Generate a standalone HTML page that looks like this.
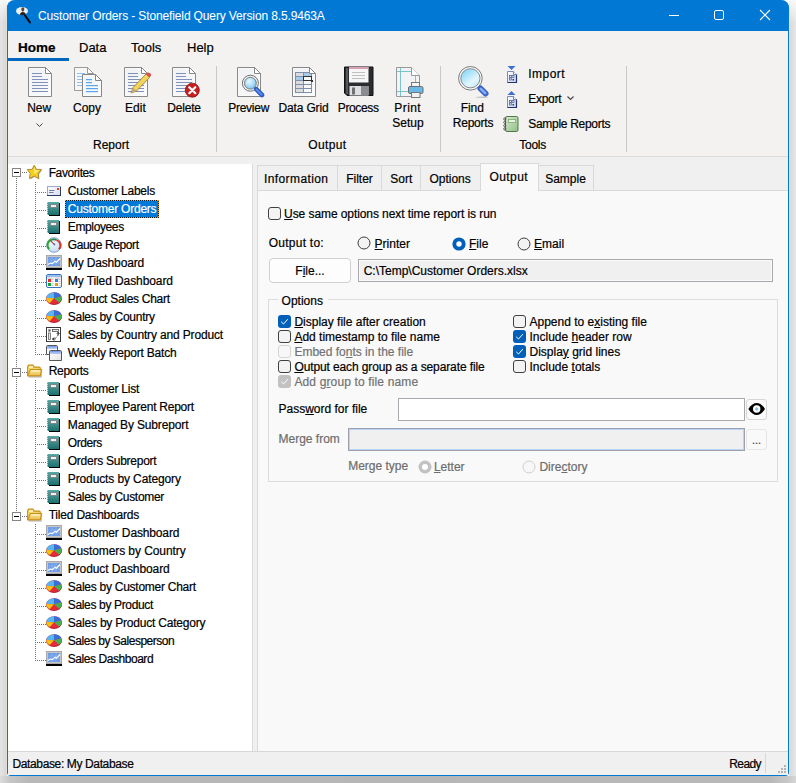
<!DOCTYPE html><html><head><meta charset="utf-8"><title>Customer Orders - Stonefield Query</title><style>
*{margin:0;padding:0;box-sizing:border-box}
html,body{width:796px;height:783px;overflow:hidden;background:#fff;font-family:"Liberation Sans",sans-serif;color:#000}
.a{position:absolute}
.t{position:absolute;white-space:nowrap;-webkit-text-stroke:0.2px currentColor}
svg{position:absolute;overflow:visible}
.u{text-decoration:underline;text-underline-offset:1px;text-decoration-thickness:1px}
</style></head><body>
<div class="a" style="left:0px;top:0px;width:7px;height:783px;background:linear-gradient(to bottom,rgba(255,255,255,0.75) 0px,rgba(255,255,255,0) 22px),linear-gradient(to right,#e4e4e4,#d6d6d6);"></div>
<div class="a" style="left:6px;top:8px;width:1px;height:768px;background:#e2ddd6;"></div>
<div class="a" style="left:789px;top:0px;width:7px;height:783px;background:linear-gradient(to bottom,rgba(255,255,255,0.8) 0px,rgba(255,255,255,0) 24px),linear-gradient(to right,#d8d8d8,#e6e6e6);"></div>
<div class="a" style="left:789px;top:8px;width:1px;height:768px;background:#e8e0d8;"></div>
<div class="a" style="left:0px;top:776px;width:796px;height:7px;background:linear-gradient(to right,#dcdcdc 0px,#c6c6c6 10px,#b8b8b8 28px,#b6b6b6 400px,#b8b8b8 770px,#c8c8c8 788px,#d6d6d6 796px);"></div>
<div class="a" style="left:7px;top:0px;width:782px;height:776px;background:#f0f0f0;border:1px solid #0078d4;border-top:0;border-radius:8px 8px 4px 4px;"></div>
<div class="a" style="left:7px;top:0px;width:782px;height:31px;background:#0078d4;border-radius:8px 8px 0 0;"></div>
<svg style="left:14px;top:4px" width="20" height="22" viewBox="0 0 20 22"><ellipse cx="8" cy="7" rx="6" ry="4" fill="#e8f2fb"/><path d="M8.8,3.2 C10,3.2 10.4,4.3 10.3,5.5 C10.2,6.8 9.6,7.6 8.8,7.6 C8,7.6 7.4,6.8 7.3,5.5 C7.2,4.3 7.6,3.2 8.8,3.2Z" fill="#6a4028"/><path d="M5.6,10.6 C6.4,8.6 7.5,7.9 8.8,7.9 C10.1,7.9 11.2,8.6 12,10.3 C10,11.4 7.5,11.3 5.6,10.6Z" fill="#2a2018"/><path d="M11,11.5 L16,18.5" stroke="#000" stroke-width="2" stroke-linecap="round"/></svg>
<div class="t" style="left:38px;top:10px;font-size:12px;line-height:12px;color:#fff;letter-spacing:-0.13px;-webkit-text-stroke:0.05px #fff;">Customer Orders - Stonefield Query Version 8.5.9463A</div>
<div class="a" style="left:669px;top:15px;width:10px;height:1px;background:#fff;"></div>
<div class="a" style="left:714px;top:10px;width:10px;height:10px;border:1px solid #fff;border-radius:2px;"></div>
<svg style="left:759px;top:9px" width="12" height="12" viewBox="0 0 12 12"><path d="M1,1 L11,11 M11,1 L1,11" stroke="#fff" stroke-width="1.1"/></svg>
<div class="a" style="left:8px;top:31px;width:780px;height:125px;background:#f3f2f1;"></div>
<div class="a" style="left:8px;top:156px;width:780px;height:1px;background:#dcdcdc;"></div>
<div class="t" style="left:18px;top:41px;font-size:13.5px;line-height:13.5px;font-weight:bold;">Home</div>
<div class="a" style="left:8px;top:58px;width:61px;height:3px;background:#0067c0;"></div>
<div class="t" style="left:79px;top:41px;font-size:13px;line-height:13px;">Data</div>
<div class="t" style="left:131px;top:41px;font-size:13px;line-height:13px;">Tools</div>
<div class="t" style="left:187px;top:41px;font-size:13px;line-height:13px;">Help</div>
<svg width="0" height="0" style="position:absolute"><defs><linearGradient id="pg" x1="0" y1="0" x2="1" y2="1"><stop offset="0" stop-color="#dfe3ea"/><stop offset="1" stop-color="#f4f5f7"/></linearGradient><radialGradient id="lens" cx="0.4" cy="0.35" r="0.7"><stop offset="0" stop-color="#eaf8ff"/><stop offset="0.6" stop-color="#a8dcf6"/><stop offset="1" stop-color="#6cc0ea"/></radialGradient><linearGradient id="lens2" x1="0.2" y1="0.1" x2="0.8" y2="0.9"><stop offset="0" stop-color="#8cd8f8"/><stop offset="0.7" stop-color="#e4f6fe"/><stop offset="1" stop-color="#c8ecfc"/></linearGradient><linearGradient id="teal" x1="0" y1="0" x2="0" y2="1"><stop offset="0" stop-color="#5aa7a4"/><stop offset="1" stop-color="#1d6f6e"/></linearGradient><linearGradient id="grn" x1="0" y1="0" x2="1" y2="1"><stop offset="0" stop-color="#d8ead0"/><stop offset="1" stop-color="#8fbf84"/></linearGradient><linearGradient id="fold" x1="0" y1="0" x2="0" y2="1"><stop offset="0" stop-color="#ffeaa0"/><stop offset="1" stop-color="#e8b84a"/></linearGradient></defs></svg>
<svg style="left:24px;top:66px" width="32" height="32" viewBox="0 0 32 32"><defs></defs><path d="M4.5,1.5 H21.5 L27.5,7.5 V30.5 H4.5 Z" fill="#fff" stroke="#888" stroke-width="1"/><path d="M5.5,2.5 H21 V8 H26.5 V29.5 H5.5Z" fill="url(#pg)" opacity="0.5"/><path d="M21.5,1.5 V7.5 H27.5 Z" fill="#fff" stroke="#888" stroke-width="1" stroke-linejoin="round"/><rect x="8" y="7" width="10" height="1" fill="#8090b8"/><rect x="8" y="10" width="10" height="1" fill="#8090b8"/><rect x="8" y="13" width="16" height="1" fill="#8090b8"/><rect x="8" y="16" width="16" height="1" fill="#8090b8"/><rect x="8" y="19" width="16" height="1" fill="#8090b8"/><rect x="8" y="22" width="16" height="1" fill="#8090b8"/><rect x="8" y="25" width="16" height="1" fill="#8090b8"/></svg>
<div class="t" style="left:-60.8px;width:200px;text-align:center;top:102px;font-size:12px;line-height:12px;">New</div>
<svg style="left:36px;top:123px" width="8" height="5" viewBox="0 0 8 5"><path d="M0.5,0.5 L3.5,3.5 L6.5,0.5" fill="none" stroke="#444" stroke-width="1"/></svg>
<svg style="left:70px;top:64px" width="40" height="36" viewBox="0 0 40 36"><path d="M4.5,3.5 H17.5 L23.5,9.5 V26.5 H4.5Z" fill="#f6f6f6" stroke="#9a9a9a"/><path d="M17.5,3.5 V9.5 H23.5Z" fill="#fff" stroke="#9a9a9a" stroke-linejoin="round"/><rect x="7" y="9" width="8" height="1" fill="#8cc0f0"/><rect x="7" y="12" width="8" height="1" fill="#8cc0f0"/><rect x="7" y="15" width="8" height="1" fill="#8cc0f0"/><rect x="7" y="18" width="8" height="1" fill="#8cc0f0"/><rect x="7" y="21" width="8" height="1" fill="#8cc0f0"/><path d="M12.5,10.5 H25.5 L31.5,16.5 V32.5 H12.5Z" fill="#fff" stroke="#858585"/><path d="M13.5,11.5 H25 V17 H30.5 V31.5 H13.5Z" fill="url(#pg)" opacity="0.45"/><path d="M25.5,10.5 V16.5 H31.5Z" fill="#fff" stroke="#858585" stroke-linejoin="round"/><rect x="16" y="15" width="6" height="1.2" fill="#58a6f0"/><rect x="16" y="18" width="6" height="1.2" fill="#58a6f0"/><rect x="16" y="21" width="12" height="1.2" fill="#58a6f0"/><rect x="16" y="24" width="12" height="1.2" fill="#58a6f0"/><rect x="16" y="27" width="12" height="1.2" fill="#58a6f0"/></svg>
<div class="t" style="left:-13px;width:200px;text-align:center;top:102px;font-size:12px;line-height:12px;">Copy</div>
<svg style="left:120px;top:66px" width="32" height="32" viewBox="0 0 32 32"><defs></defs><path d="M4.5,1.5 H21.5 L27.5,7.5 V30.5 H4.5 Z" fill="#fff" stroke="#888" stroke-width="1"/><path d="M5.5,2.5 H21 V8 H26.5 V29.5 H5.5Z" fill="url(#pg)" opacity="0.5"/><path d="M21.5,1.5 V7.5 H27.5 Z" fill="#fff" stroke="#888" stroke-width="1" stroke-linejoin="round"/><rect x="8" y="7" width="10" height="1" fill="#8090b8"/><rect x="8" y="10" width="10" height="1" fill="#8090b8"/><rect x="8" y="13" width="16" height="1" fill="#8090b8"/><rect x="8" y="16" width="16" height="1" fill="#8090b8"/><rect x="8" y="19" width="16" height="1" fill="#8090b8"/><rect x="8" y="22" width="16" height="1" fill="#8090b8"/><rect x="8" y="25" width="16" height="1" fill="#8090b8"/><path d="M11,27 L13,21.5 L26,8 L29.5,11.5 L16.5,25 Z" fill="#f4d35a" stroke="#8a7a3a" stroke-width="0.8"/><path d="M11,27 L13,21.5 L16.5,25Z" fill="#c8a878"/><path d="M26,8 L27.5,6.5 Q29.5,6 31,8 L31,9.5 L29.5,11.5Z" fill="#e05050"/></svg>
<div class="t" style="left:35.400000000000006px;width:200px;text-align:center;top:102px;font-size:12px;line-height:12px;">Edit</div>
<svg style="left:168px;top:66px" width="32" height="32" viewBox="0 0 32 32"><defs></defs><path d="M4.5,1.5 H21.5 L27.5,7.5 V30.5 H4.5 Z" fill="#fff" stroke="#888" stroke-width="1"/><path d="M5.5,2.5 H21 V8 H26.5 V29.5 H5.5Z" fill="url(#pg)" opacity="0.5"/><path d="M21.5,1.5 V7.5 H27.5 Z" fill="#fff" stroke="#888" stroke-width="1" stroke-linejoin="round"/><rect x="8" y="7" width="10" height="1" fill="#8090b8"/><rect x="8" y="10" width="10" height="1" fill="#8090b8"/><rect x="8" y="13" width="16" height="1" fill="#8090b8"/><rect x="8" y="16" width="16" height="1" fill="#8090b8"/><rect x="8" y="19" width="16" height="1" fill="#8090b8"/><rect x="8" y="22" width="16" height="1" fill="#8090b8"/><rect x="8" y="25" width="16" height="1" fill="#8090b8"/><circle cx="24.3" cy="24.2" r="7" fill="#c81e1e" stroke="#8a1010" stroke-width="0.8"/><path d="M21.3,21.2 L27.3,27.2 M27.3,21.2 L21.3,27.2" stroke="#fff" stroke-width="2.2" stroke-linecap="round"/></svg>
<div class="t" style="left:84px;width:200px;text-align:center;top:102px;font-size:12px;line-height:12px;letter-spacing:-0.2px;">Delete</div>
<div class="a" style="left:216px;top:66px;width:1px;height:86px;background:#c8c8c8;"></div>
<div class="a" style="left:440px;top:66px;width:1px;height:86px;background:#c8c8c8;"></div>
<div class="a" style="left:626px;top:66px;width:1px;height:86px;background:#c8c8c8;"></div>
<div class="t" style="left:11px;width:200px;text-align:center;top:139px;font-size:12px;line-height:12px;">Report</div>
<svg style="left:233px;top:66px" width="32" height="32" viewBox="0 0 32 32"><defs></defs><path d="M4.5,1.5 H21.5 L27.5,7.5 V30.5 H4.5 Z" fill="#fff" stroke="#888" stroke-width="1"/><path d="M5.5,2.5 H21 V8 H26.5 V29.5 H5.5Z" fill="url(#pg)" opacity="0.5"/><path d="M21.5,1.5 V7.5 H27.5 Z" fill="#fff" stroke="#888" stroke-width="1" stroke-linejoin="round"/><circle cx="17.4" cy="17.2" r="8" fill="#f6f6f6" stroke="#6e6e6e" stroke-width="1"/><circle cx="17.4" cy="17.2" r="5.9" fill="url(#lens)" stroke="#7a7a7a" stroke-width="1"/><path d="M23.2,23.2 L29,29" stroke="#2c5cc0" stroke-width="4.6" stroke-linecap="round"/><path d="M23.4,23.4 L28.6,28.6" stroke="#5a8ef0" stroke-width="2" stroke-linecap="round"/></svg>
<div class="t" style="left:148.6px;width:200px;text-align:center;top:102px;font-size:12px;line-height:12px;letter-spacing:-0.25px;">Preview</div>
<svg style="left:288px;top:66px" width="32" height="32" viewBox="0 0 32 32"><defs></defs><path d="M4.5,1.5 H21.5 L27.5,7.5 V30.5 H4.5 Z" fill="#fff" stroke="#888" stroke-width="1"/><path d="M5.5,2.5 H21 V8 H26.5 V29.5 H5.5Z" fill="url(#pg)" opacity="0.5"/><path d="M21.5,1.5 V7.5 H27.5 Z" fill="#fff" stroke="#888" stroke-width="1" stroke-linejoin="round"/><rect x="7.5" y="6.5" width="8" height="4" fill="#dcdcdc" stroke="#7f8fae" stroke-width="1"/><rect x="15.5" y="6.5" width="8" height="4" fill="#a9cbe8" stroke="#7f8fae" stroke-width="1"/><rect x="7.5" y="10.5" width="8" height="4" fill="#a9cbe8" stroke="#7f8fae" stroke-width="1"/><rect x="15.5" y="10.5" width="8" height="4" fill="#f8f8f8" stroke="#7f8fae" stroke-width="1"/><rect x="7.5" y="14.5" width="8" height="4" fill="#dcdcdc" stroke="#7f8fae" stroke-width="1"/><rect x="15.5" y="14.5" width="8" height="4" fill="#f8f8f8" stroke="#7f8fae" stroke-width="1"/><rect x="7.5" y="18.5" width="8" height="4" fill="#dcdcdc" stroke="#7f8fae" stroke-width="1"/><rect x="15.5" y="18.5" width="8" height="4" fill="#f8f8f8" stroke="#7f8fae" stroke-width="1"/><rect x="7.5" y="22.5" width="8" height="4" fill="#dcdcdc" stroke="#7f8fae" stroke-width="1"/><rect x="15.5" y="22.5" width="8" height="4" fill="#f8f8f8" stroke="#7f8fae" stroke-width="1"/><rect x="15.5" y="10.5" width="8" height="4" fill="none" stroke="#333" stroke-width="1"/><rect x="23" y="14" width="2" height="2" fill="#333"/><path d="M21.5,1.5 V7.5 H27.5 Z" fill="#fff" stroke="#888" stroke-width="1"/></svg>
<div class="t" style="left:203.5px;width:200px;text-align:center;top:102px;font-size:12px;line-height:12px;letter-spacing:-0.15px;">Data Grid</div>
<svg style="left:342px;top:64px" width="34" height="34" viewBox="0 0 34 34"><path d="M2.5,3 H31 V31.5 H5 L2.5,29 Z" fill="#2a2c30" stroke="#111" stroke-width="1"/><rect x="4" y="4" width="2" height="26" fill="#55585e"/><rect x="7" y="3" width="19.5" height="15.5" fill="#f6f6f6"/><rect x="7" y="3" width="19.5" height="2" fill="#d9a0b4"/><rect x="10" y="8" width="13" height="1" fill="#c0c0c0"/><rect x="10" y="11" width="13" height="1" fill="#c0c0c0"/><rect x="10" y="14" width="13" height="1" fill="#c0c0c0"/><rect x="7.5" y="22" width="19" height="9.5" fill="#dcdee2"/><rect x="10" y="23.5" width="3" height="7" fill="#707070"/><rect x="19" y="22" width="7.5" height="9.5" fill="#8a8c90"/></svg>
<div class="t" style="left:258.2px;width:200px;text-align:center;top:102px;font-size:12px;line-height:12px;letter-spacing:-0.35px;">Process</div>
<svg style="left:392px;top:64px" width="36" height="36" viewBox="0 0 36 36"><path d="M4.5,3.5 H19.5 L27.5,11.5 V32.5 H4.5 Z" fill="#f2f3f4" stroke="#999"/><path d="M19.5,3.5 V11.5 H27.5" fill="#fff" stroke="#999"/><rect x="8" y="4" width="1" height="28" fill="#7cc4cc"/><rect x="23" y="12" width="1" height="20" fill="#7cc4cc"/><rect x="5" y="7" width="14" height="1" fill="#7cc4cc"/><rect x="5" y="27" width="22" height="1" fill="#7cc4cc"/><rect x="19.5" y="18.5" width="8" height="5" fill="#f4f4f4" stroke="#777"/><rect x="16.5" y="22.5" width="14.5" height="7" rx="1.5" fill="#6ab8e8" stroke="#6d6d6d"/><rect x="19.5" y="28.5" width="8.5" height="5" fill="#f0f0f0" stroke="#777"/></svg>
<div class="t" style="left:307.7px;width:200px;text-align:center;top:102px;font-size:12px;line-height:12px;letter-spacing:0.4px;">Print</div>
<div class="t" style="left:308px;width:200px;text-align:center;top:117px;font-size:12px;line-height:12px;">Setup</div>
<div class="t" style="left:227.39999999999998px;width:200px;text-align:center;top:139px;font-size:12px;line-height:12px;letter-spacing:0.35px;">Output</div>
<svg style="left:452px;top:62px" width="40" height="40" viewBox="0 0 40 40"><ellipse cx="30" cy="35.3" rx="6.5" ry="0.7" fill="#c4c4c4"/><circle cx="18.4" cy="16.3" r="11.8" fill="#f8f8f8" stroke="#7a7a7a" stroke-width="1"/><circle cx="18.4" cy="16.3" r="9.6" fill="url(#lens2)" stroke="#8a8a8a" stroke-width="1"/><path d="M28.5,26.5 L33.5,31.5" stroke="#3a62c8" stroke-width="6" stroke-linecap="round"/><path d="M28.8,26.8 L33.2,31.2" stroke="#86aef4" stroke-width="2.6" stroke-linecap="round"/></svg>
<div class="t" style="left:372.3px;width:200px;text-align:center;top:102px;font-size:12px;line-height:12px;">Find</div>
<div class="t" style="left:373px;width:200px;text-align:center;top:117px;font-size:12px;line-height:12px;letter-spacing:-0.2px;">Reports</div>
<svg style="left:506px;top:66px" width="12" height="18" viewBox="0 0 12 18"><path d="M1.5,0 L9.5,0 L5.5,4Z" fill="#3a70d8"/><defs><linearGradient id="sd" x1="0" y1="0" x2="1" y2="1"><stop offset="0" stop-color="#ffffff"/><stop offset="1" stop-color="#c4d0ea"/></linearGradient></defs><path d="M1.5,16.5 V5.5 H7.5 L10.5,8.5 V16.5Z" fill="url(#sd)" stroke="#7a8cb4"/><path d="M10.5,8.5 V16.5 H1.5" fill="none" stroke="#1e3470" stroke-width="1.2"/><path d="M7.5,5.5 V8.5 H10.5" fill="#fff" stroke="#5a6c9a" stroke-width="0.8"/><rect x="3.5" y="9.5" width="2" height="2" fill="#dfe6f6" stroke="#4a5c90" stroke-width="0.7"/><rect x="6" y="9.5" width="2" height="2" fill="#dfe6f6" stroke="#4a5c90" stroke-width="0.7"/><rect x="3.5" y="12" width="2" height="2" fill="#dfe6f6" stroke="#4a5c90" stroke-width="0.7"/><rect x="6.5" y="13" width="1.5" height="1.5" fill="#2a3c70"/></svg>
<div class="t" style="left:528.3px;top:68px;font-size:12px;line-height:12px;letter-spacing:0.45px;">Import</div>
<svg style="left:506px;top:91px" width="12" height="18" viewBox="0 0 12 18"><path d="M1.5,4 L5.5,0 L9.5,4Z" fill="#3a70d8"/><defs><linearGradient id="sd" x1="0" y1="0" x2="1" y2="1"><stop offset="0" stop-color="#ffffff"/><stop offset="1" stop-color="#c4d0ea"/></linearGradient></defs><path d="M1.5,16.5 V5.5 H7.5 L10.5,8.5 V16.5Z" fill="url(#sd)" stroke="#7a8cb4"/><path d="M10.5,8.5 V16.5 H1.5" fill="none" stroke="#1e3470" stroke-width="1.2"/><path d="M7.5,5.5 V8.5 H10.5" fill="#fff" stroke="#5a6c9a" stroke-width="0.8"/><rect x="3.5" y="9.5" width="2" height="2" fill="#dfe6f6" stroke="#4a5c90" stroke-width="0.7"/><rect x="6" y="9.5" width="2" height="2" fill="#dfe6f6" stroke="#4a5c90" stroke-width="0.7"/><rect x="3.5" y="12" width="2" height="2" fill="#dfe6f6" stroke="#4a5c90" stroke-width="0.7"/><rect x="6.5" y="13" width="1.5" height="1.5" fill="#2a3c70"/></svg>
<div class="t" style="left:528.3px;top:93px;font-size:12px;line-height:12px;letter-spacing:-0.3px;">Export</div>
<svg style="left:567px;top:96px" width="8" height="5" viewBox="0 0 8 5"><path d="M0.5,0.5 L3.5,3.5 L6.5,0.5" fill="none" stroke="#444" stroke-width="1.1"/></svg>
<svg style="left:502px;top:115px" width="18" height="18" viewBox="0 0 18 18"><rect x="3.5" y="1.5" width="12.5" height="15" rx="1.5" fill="url(#grn)" stroke="#4e7a46"/><rect x="6.5" y="4.5" width="7" height="3" fill="#e8f4e2" stroke="#7aa870" stroke-width="0.8"/><circle cx="2.8" cy="4" r="1.1" fill="none" stroke="#505050" stroke-width="0.9"/><circle cx="2.8" cy="7.3" r="1.1" fill="none" stroke="#505050" stroke-width="0.9"/><circle cx="2.8" cy="10.6" r="1.1" fill="none" stroke="#505050" stroke-width="0.9"/><circle cx="2.8" cy="13.9" r="1.1" fill="none" stroke="#505050" stroke-width="0.9"/></svg>
<div class="t" style="left:528.3px;top:118px;font-size:12px;line-height:12px;letter-spacing:-0.3px;">Sample Reports</div>
<div class="t" style="left:432.6px;width:200px;text-align:center;top:139px;font-size:12px;line-height:12px;letter-spacing:-0.3px;">Tools</div>
<div class="a" style="left:8px;top:157px;width:780px;height:7px;background:#f0f0f0;"></div>
<div class="a" style="left:8px;top:164px;width:244px;height:587px;background:#fff;"></div>
<div class="a" style="left:252px;top:164px;width:1px;height:587px;background:#dadada;"></div>
<div class="a" style="left:16px;top:178px;width:1px;height:334px;background:repeating-linear-gradient(to bottom,#707070 0,#707070 1px,transparent 1px,transparent 2px);"></div>
<div class="a" style="left:35px;top:182px;width:1px;height:173px;background:repeating-linear-gradient(to bottom,#707070 0,#707070 1px,transparent 1px,transparent 2px);"></div>
<div class="a" style="left:35px;top:380px;width:1px;height:119px;background:repeating-linear-gradient(to bottom,#707070 0,#707070 1px,transparent 1px,transparent 2px);"></div>
<div class="a" style="left:35px;top:524px;width:1px;height:137px;background:repeating-linear-gradient(to bottom,#707070 0,#707070 1px,transparent 1px,transparent 2px);"></div>
<div class="a" style="left:12px;top:168px;width:9px;height:9px;border:1px solid #858585;background:#fff;"></div>
<div class="a" style="left:14px;top:172px;width:5px;height:1px;background:#000;"></div>
<div class="a" style="left:22px;top:172px;width:5px;height:1px;background:repeating-linear-gradient(to right,#707070 0,#707070 1px,transparent 1px,transparent 2px);"></div>
<svg style="left:24px;top:162px" width="20" height="20" viewBox="0 0 20 20"><path d="M11,4.1 L13.1,8.2 L18.2,8.2 L15,12.3 L15.4,17.4 L11,14.8 L6.3,17.4 L7,12.3 L4.1,8.2 L8.9,8.2Z" fill="#3a4470" opacity="0.45"/><path d="M10.2,3.3 L12.3,7.4 L17.4,7.4 L14.2,11.5 L14.6,16.6 L10.2,14 L5.5,16.6 L6.2,11.5 L3.3,7.4 L8.1,7.4Z" fill="#f6cf1c" stroke="#b58a2a" stroke-width="1" stroke-linejoin="round"/><path d="M10.2,5 L11.6,8.3 L15.3,8.4 L10.4,12 Z" fill="#fff59a" opacity="0.8"/></svg>
<div class="t" style="left:48.7px;top:167px;font-size:12px;line-height:12px;letter-spacing:-0.400px;">Favorites</div>
<div class="a" style="left:37px;top:192px;width:9px;height:1px;background:repeating-linear-gradient(to right,#707070 0,#707070 1px,transparent 1px,transparent 2px);"></div>
<svg style="left:46px;top:183px" width="16" height="16" viewBox="0 0 16 16"><defs><linearGradient id="env" x1="0" y1="0" x2="1" y2="1"><stop offset="0" stop-color="#fff"/><stop offset="1" stop-color="#d8dcf0"/></linearGradient></defs><rect x="1.5" y="3.5" width="13" height="9" fill="url(#env)" stroke="#9aa8cc"/><path d="M1,12.5 H15 M14.5,4 V13" stroke="#2c3c64" stroke-width="1"/><rect x="3" y="7" width="5.5" height="1" fill="#7080a8"/><rect x="3" y="9" width="4.5" height="1" fill="#7080a8"/><rect x="11" y="5" width="2" height="2" fill="#e8401a"/></svg>
<div class="t" style="left:67.8px;top:185px;font-size:12px;line-height:12px;letter-spacing:-0.234px;">Customer Labels</div>
<div class="a" style="left:37px;top:210px;width:9px;height:1px;background:repeating-linear-gradient(to right,#707070 0,#707070 1px,transparent 1px,transparent 2px);"></div>
<svg style="left:46px;top:201px" width="16" height="16" viewBox="0 0 16 16"><rect x="2" y="1" width="11" height="13" fill="url(#teal)"/><rect x="13" y="2" width="1" height="13" fill="#000"/><rect x="3" y="14" width="11" height="1" fill="#000"/><rect x="4.5" y="3.5" width="6" height="3" fill="#f2f4f4" stroke="#7a8a8a" stroke-width="1"/><rect x="1" y="1" width="1" height="13" fill="#f2e41a"/><path d="M1,2.5 h1 M1,4.5 h1 M1,6.5 h1 M1,8.5 h1 M1,10.5 h1 M1,12.5 h1" stroke="#6a6a20" stroke-width="0.6"/></svg>
<div class="a" style="left:65px;top:200px;width:94px;height:18px;background:#0078d7;"></div>
<div class="a" style="left:65px;top:200px;width:94px;height:1px;background:repeating-linear-gradient(to right,#f39a2c 0,#f39a2c 1px,#1a1a1a 1px,#1a1a1a 2px);"></div>
<div class="a" style="left:65px;top:217px;width:94px;height:1px;background:repeating-linear-gradient(to right,#f39a2c 0,#f39a2c 1px,#1a1a1a 1px,#1a1a1a 2px);"></div>
<div class="a" style="left:65px;top:200px;width:1px;height:18px;background:repeating-linear-gradient(to bottom,#f39a2c 0,#f39a2c 1px,#1a1a1a 1px,#1a1a1a 2px);"></div>
<div class="a" style="left:158px;top:200px;width:1px;height:18px;background:repeating-linear-gradient(to bottom,#f39a2c 0,#f39a2c 1px,#1a1a1a 1px,#1a1a1a 2px);"></div>
<div class="t" style="left:67.8px;top:203px;font-size:12px;line-height:12px;color:#fff;letter-spacing:-0.230px;">Customer Orders</div>
<div class="a" style="left:37px;top:228px;width:9px;height:1px;background:repeating-linear-gradient(to right,#707070 0,#707070 1px,transparent 1px,transparent 2px);"></div>
<svg style="left:46px;top:219px" width="16" height="16" viewBox="0 0 16 16"><rect x="2" y="1" width="11" height="13" fill="url(#teal)"/><rect x="13" y="2" width="1" height="13" fill="#000"/><rect x="3" y="14" width="11" height="1" fill="#000"/><rect x="4.5" y="3.5" width="6" height="3" fill="#f2f4f4" stroke="#7a8a8a" stroke-width="1"/><rect x="1" y="1" width="1" height="13" fill="#f2e41a"/><path d="M1,2.5 h1 M1,4.5 h1 M1,6.5 h1 M1,8.5 h1 M1,10.5 h1 M1,12.5 h1" stroke="#6a6a20" stroke-width="0.6"/></svg>
<div class="t" style="left:67.8px;top:221px;font-size:12px;line-height:12px;letter-spacing:-0.376px;">Employees</div>
<div class="a" style="left:37px;top:246px;width:9px;height:1px;background:repeating-linear-gradient(to right,#707070 0,#707070 1px,transparent 1px,transparent 2px);"></div>
<svg style="left:46px;top:237px" width="16" height="16" viewBox="0 0 16 16"><defs><radialGradient id="gg" cx="0.45" cy="0.4" r="0.7"><stop offset="0" stop-color="#f4f9ff"/><stop offset="1" stop-color="#bcd6f0"/></radialGradient></defs><circle cx="8" cy="8" r="7.3" fill="url(#gg)" stroke="#7aa0cc" stroke-width="1"/><path d="M3.2,12.2 A5.6,5.6 0 0 1 6.2,2.7" fill="none" stroke="#28a828" stroke-width="1.8"/><path d="M6.2,2.7 A5.6,5.6 0 0 1 10.5,3" fill="none" stroke="#2a8a3a" stroke-width="1.8"/><path d="M10.5,3 A5.6,5.6 0 0 1 12.8,12.2" fill="none" stroke="#e02a1a" stroke-width="1.8"/><path d="M8.4,7.4 L4.6,3.8" stroke="#b03a3a" stroke-width="1.1"/><circle cx="8.4" cy="7.4" r="1" fill="#5a7aa0"/></svg>
<div class="t" style="left:67.8px;top:239px;font-size:12px;line-height:12px;letter-spacing:-0.374px;">Gauge Report</div>
<div class="a" style="left:37px;top:264px;width:9px;height:1px;background:repeating-linear-gradient(to right,#707070 0,#707070 1px,transparent 1px,transparent 2px);"></div>
<svg style="left:46px;top:255px" width="16" height="16" viewBox="0 0 16 16"><rect x="0" y="0" width="16" height="13" fill="#c6c6c6"/><rect x="0.5" y="0.5" width="15" height="12" fill="none" stroke="#a8a8a8"/><rect x="2" y="2" width="12" height="9" fill="#6e9ce6"/><path d="M2,5 H14 M2,8 H14 M6,2 V11 M10,2 V11" stroke="#8ab2f0" stroke-width="0.8"/><path d="M2,9.5 L4.5,8 L6.5,8.6 L9,6.2 L10.5,7.2 L14,3.5" fill="none" stroke="#fff" stroke-width="1.1"/><rect x="0" y="13" width="16" height="2" fill="#000"/></svg>
<div class="t" style="left:67.8px;top:257px;font-size:12px;line-height:12px;letter-spacing:-0.148px;">My Dashboard</div>
<div class="a" style="left:37px;top:282px;width:9px;height:1px;background:repeating-linear-gradient(to right,#707070 0,#707070 1px,transparent 1px,transparent 2px);"></div>
<svg style="left:46px;top:273px" width="16" height="16" viewBox="0 0 16 16"><rect x="0.5" y="1.5" width="15" height="13" rx="1.5" fill="#fff" stroke="#3a70c0"/><rect x="1" y="2" width="14" height="2" fill="#9cc0ec"/><rect x="1.5" y="4.5" width="13" height="1" fill="#b8b8b8"/><rect x="6" y="4.5" width="3" height="1" fill="#fff"/><rect x="2" y="6" width="3" height="3" fill="#e83020"/><rect x="9" y="6" width="3" height="3" fill="#3a7ad0"/><rect x="2" y="10" width="3" height="3" fill="#18a030"/><rect x="9" y="10" width="3" height="3" fill="#e0a010"/><path d="M5.5,6.5 h2 M5.5,8.5 h2 M12.5,6.5 h2 M12.5,8.5 h2 M5.5,10.5 h2 M5.5,12.5 h2 M12.5,10.5 h2 M12.5,12.5 h2" stroke="#9aa8c0" stroke-width="0.6"/></svg>
<div class="t" style="left:67.8px;top:275px;font-size:12px;line-height:12px;letter-spacing:-0.091px;">My Tiled Dashboard</div>
<div class="a" style="left:37px;top:300px;width:9px;height:1px;background:repeating-linear-gradient(to right,#707070 0,#707070 1px,transparent 1px,transparent 2px);"></div>
<svg style="left:46px;top:291px" width="16" height="16" viewBox="0 0 16 16"><ellipse cx="8" cy="8" rx="7.8" ry="5.9" fill="#b02030"/><ellipse cx="8" cy="7.2" rx="7.8" ry="5.9" fill="#e8283c"/><path d="M8,7.2 L0.3,7 A7.8,5.9 0 0 1 8,1.3 Z" fill="#5ab4f0"/><path d="M8,7.2 L8,1.3 A7.8,5.9 0 0 1 15.4,5.3 Z" fill="#3a6ed8"/><path d="M8,7.2 L15.4,5.3 A7.8,5.9 0 0 1 12.8,11.6 Z" fill="#48b050"/><path d="M8,7.2 L3.8,12 A7.8,5.9 0 0 1 0.3,7 Z" fill="#f6c010"/><path d="M0.4,8 A7.8,5.9 0 0 0 3.8,12.8 L3.8,12 A7.8,5.9 0 0 1 0.3,7Z" fill="#c89000"/><path d="M12.8,12.4 A7.8,5.9 0 0 0 15.7,8 L15.7,7.2 A7.8,5.9 0 0 1 12.8,11.6Z" fill="#2a8a30"/></svg>
<div class="t" style="left:67.8px;top:293px;font-size:12px;line-height:12px;letter-spacing:-0.286px;">Product Sales Chart</div>
<div class="a" style="left:37px;top:318px;width:9px;height:1px;background:repeating-linear-gradient(to right,#707070 0,#707070 1px,transparent 1px,transparent 2px);"></div>
<svg style="left:46px;top:309px" width="16" height="16" viewBox="0 0 16 16"><ellipse cx="8" cy="8" rx="7.8" ry="5.9" fill="#b02030"/><ellipse cx="8" cy="7.2" rx="7.8" ry="5.9" fill="#e8283c"/><path d="M8,7.2 L0.3,7 A7.8,5.9 0 0 1 8,1.3 Z" fill="#5ab4f0"/><path d="M8,7.2 L8,1.3 A7.8,5.9 0 0 1 15.4,5.3 Z" fill="#3a6ed8"/><path d="M8,7.2 L15.4,5.3 A7.8,5.9 0 0 1 12.8,11.6 Z" fill="#48b050"/><path d="M8,7.2 L3.8,12 A7.8,5.9 0 0 1 0.3,7 Z" fill="#f6c010"/><path d="M0.4,8 A7.8,5.9 0 0 0 3.8,12.8 L3.8,12 A7.8,5.9 0 0 1 0.3,7Z" fill="#c89000"/><path d="M12.8,12.4 A7.8,5.9 0 0 0 15.7,8 L15.7,7.2 A7.8,5.9 0 0 1 12.8,11.6Z" fill="#2a8a30"/></svg>
<div class="t" style="left:67.8px;top:311px;font-size:12px;line-height:12px;letter-spacing:-0.284px;">Sales by Country</div>
<div class="a" style="left:37px;top:336px;width:9px;height:1px;background:repeating-linear-gradient(to right,#707070 0,#707070 1px,transparent 1px,transparent 2px);"></div>
<svg style="left:46px;top:327px" width="16" height="16" viewBox="0 0 16 16"><rect x="0.5" y="0.5" width="14" height="14" fill="#fff" stroke="#383838"/><rect x="2.5" y="2.5" width="2" height="2" fill="#555" stroke="#999" stroke-width="0.5"/><rect x="6.5" y="2.5" width="6" height="2" fill="#e6e6e6" stroke="#555" stroke-width="0.8"/><rect x="2.5" y="6" width="2" height="6.5" fill="#e6e6e6" stroke="#666" stroke-width="0.8"/><path d="M7,12 Q11.5,11.5 12,6.5" fill="none" stroke="#333" stroke-width="0.9" stroke-dasharray="1,0.8"/><path d="M10.8,6.8 L12.2,5.2 L13.4,7 M12.2,5.2 V8.5" fill="none" stroke="#222" stroke-width="0.9"/><path d="M8.4,10.6 L6.5,12 L8.4,13.4 M6.5,12 H9.5" fill="none" stroke="#222" stroke-width="0.9"/></svg>
<div class="t" style="left:67.8px;top:329px;font-size:12px;line-height:12px;letter-spacing:-0.149px;">Sales by Country and Product</div>
<div class="a" style="left:37px;top:354px;width:9px;height:1px;background:repeating-linear-gradient(to right,#707070 0,#707070 1px,transparent 1px,transparent 2px);"></div>
<svg style="left:46px;top:345px" width="16" height="16" viewBox="0 0 16 16"><defs><linearGradient id="wt" x1="0" y1="0" x2="0" y2="1"><stop offset="0" stop-color="#5a82dc"/><stop offset="0.5" stop-color="#a6c4f6"/><stop offset="1" stop-color="#6a90e0"/></linearGradient><linearGradient id="wb" x1="0" y1="0" x2="1" y2="1"><stop offset="0" stop-color="#fff"/><stop offset="1" stop-color="#e4e4e4"/></linearGradient></defs><path d="M0.5,9.5 V1.8 Q0.5,0.5 1.8,0.5 H10.2 Q11.5,0.5 11.5,1.8 V9.5Z" fill="#fff" stroke="#555"/><rect x="1" y="1" width="10" height="2.5" rx="0.8" fill="url(#wt)"/><path d="M3.5,15.5 V6.8 Q3.5,5.5 4.8,5.5 H14.2 Q15.5,5.5 15.5,6.8 V15.5Z" fill="url(#wb)" stroke="#555"/><rect x="4" y="6" width="11" height="2.5" rx="0.8" fill="url(#wt)"/></svg>
<div class="t" style="left:67.8px;top:347px;font-size:12px;line-height:12px;letter-spacing:-0.200px;">Weekly Report Batch</div>
<div class="a" style="left:12px;top:368px;width:9px;height:9px;border:1px solid #858585;background:#fff;"></div>
<div class="a" style="left:14px;top:372px;width:5px;height:1px;background:#000;"></div>
<div class="a" style="left:22px;top:372px;width:5px;height:1px;background:repeating-linear-gradient(to right,#707070 0,#707070 1px,transparent 1px,transparent 2px);"></div>
<svg style="left:26px;top:363px" width="16" height="16" viewBox="0 0 16 16"><path d="M2.3,14 H15 L15.6,5 H8.5 L7.5,3 H3.3 L1.8,4.5 V13.5Z" fill="#3a4470" opacity="0.3" transform="translate(0.8,0.8)"/><path d="M1.6,12.5 V3.6 L2.6,2.1 H7 L8,4.1 H13.6 L14.3,5 V12.5Z" fill="#f3d466" stroke="#c8921a" stroke-width="1.1"/><rect x="3" y="3.4" width="4" height="1.2" fill="#fffbe0"/><path d="M1.8,12.9 L4.3,6.6 H15.4 L14.4,12.9Z" fill="url(#fold)" stroke="#c8921a" stroke-width="1.1" stroke-linejoin="round"/><rect x="5" y="7.3" width="9" height="1" fill="#fffbe0"/></svg>
<div class="t" style="left:48.7px;top:365px;font-size:12px;line-height:12px;letter-spacing:-0.308px;">Reports</div>
<div class="a" style="left:37px;top:390px;width:9px;height:1px;background:repeating-linear-gradient(to right,#707070 0,#707070 1px,transparent 1px,transparent 2px);"></div>
<svg style="left:46px;top:381px" width="16" height="16" viewBox="0 0 16 16"><rect x="2" y="1" width="11" height="13" fill="url(#teal)"/><rect x="13" y="2" width="1" height="13" fill="#000"/><rect x="3" y="14" width="11" height="1" fill="#000"/><rect x="4.5" y="3.5" width="6" height="3" fill="#f2f4f4" stroke="#7a8a8a" stroke-width="1"/><rect x="1" y="1" width="1" height="13" fill="#f2e41a"/><path d="M1,2.5 h1 M1,4.5 h1 M1,6.5 h1 M1,8.5 h1 M1,10.5 h1 M1,12.5 h1" stroke="#6a6a20" stroke-width="0.6"/></svg>
<div class="t" style="left:67.8px;top:383px;font-size:12px;line-height:12px;letter-spacing:-0.200px;">Customer List</div>
<div class="a" style="left:37px;top:408px;width:9px;height:1px;background:repeating-linear-gradient(to right,#707070 0,#707070 1px,transparent 1px,transparent 2px);"></div>
<svg style="left:46px;top:399px" width="16" height="16" viewBox="0 0 16 16"><rect x="2" y="1" width="11" height="13" fill="url(#teal)"/><rect x="13" y="2" width="1" height="13" fill="#000"/><rect x="3" y="14" width="11" height="1" fill="#000"/><rect x="4.5" y="3.5" width="6" height="3" fill="#f2f4f4" stroke="#7a8a8a" stroke-width="1"/><rect x="1" y="1" width="1" height="13" fill="#f2e41a"/><path d="M1,2.5 h1 M1,4.5 h1 M1,6.5 h1 M1,8.5 h1 M1,10.5 h1 M1,12.5 h1" stroke="#6a6a20" stroke-width="0.6"/></svg>
<div class="t" style="left:67.8px;top:401px;font-size:12px;line-height:12px;letter-spacing:-0.242px;">Employee Parent Report</div>
<div class="a" style="left:37px;top:426px;width:9px;height:1px;background:repeating-linear-gradient(to right,#707070 0,#707070 1px,transparent 1px,transparent 2px);"></div>
<svg style="left:46px;top:417px" width="16" height="16" viewBox="0 0 16 16"><rect x="2" y="1" width="11" height="13" fill="url(#teal)"/><rect x="13" y="2" width="1" height="13" fill="#000"/><rect x="3" y="14" width="11" height="1" fill="#000"/><rect x="4.5" y="3.5" width="6" height="3" fill="#f2f4f4" stroke="#7a8a8a" stroke-width="1"/><rect x="1" y="1" width="1" height="13" fill="#f2e41a"/><path d="M1,2.5 h1 M1,4.5 h1 M1,6.5 h1 M1,8.5 h1 M1,10.5 h1 M1,12.5 h1" stroke="#6a6a20" stroke-width="0.6"/></svg>
<div class="t" style="left:67.8px;top:419px;font-size:12px;line-height:12px;letter-spacing:-0.144px;">Managed By Subreport</div>
<div class="a" style="left:37px;top:444px;width:9px;height:1px;background:repeating-linear-gradient(to right,#707070 0,#707070 1px,transparent 1px,transparent 2px);"></div>
<svg style="left:46px;top:435px" width="16" height="16" viewBox="0 0 16 16"><rect x="2" y="1" width="11" height="13" fill="url(#teal)"/><rect x="13" y="2" width="1" height="13" fill="#000"/><rect x="3" y="14" width="11" height="1" fill="#000"/><rect x="4.5" y="3.5" width="6" height="3" fill="#f2f4f4" stroke="#7a8a8a" stroke-width="1"/><rect x="1" y="1" width="1" height="13" fill="#f2e41a"/><path d="M1,2.5 h1 M1,4.5 h1 M1,6.5 h1 M1,8.5 h1 M1,10.5 h1 M1,12.5 h1" stroke="#6a6a20" stroke-width="0.6"/></svg>
<div class="t" style="left:67.8px;top:437px;font-size:12px;line-height:12px;letter-spacing:-0.455px;">Orders</div>
<div class="a" style="left:37px;top:462px;width:9px;height:1px;background:repeating-linear-gradient(to right,#707070 0,#707070 1px,transparent 1px,transparent 2px);"></div>
<svg style="left:46px;top:453px" width="16" height="16" viewBox="0 0 16 16"><rect x="2" y="1" width="11" height="13" fill="url(#teal)"/><rect x="13" y="2" width="1" height="13" fill="#000"/><rect x="3" y="14" width="11" height="1" fill="#000"/><rect x="4.5" y="3.5" width="6" height="3" fill="#f2f4f4" stroke="#7a8a8a" stroke-width="1"/><rect x="1" y="1" width="1" height="13" fill="#f2e41a"/><path d="M1,2.5 h1 M1,4.5 h1 M1,6.5 h1 M1,8.5 h1 M1,10.5 h1 M1,12.5 h1" stroke="#6a6a20" stroke-width="0.6"/></svg>
<div class="t" style="left:67.8px;top:455px;font-size:12px;line-height:12px;letter-spacing:-0.258px;">Orders Subreport</div>
<div class="a" style="left:37px;top:480px;width:9px;height:1px;background:repeating-linear-gradient(to right,#707070 0,#707070 1px,transparent 1px,transparent 2px);"></div>
<svg style="left:46px;top:471px" width="16" height="16" viewBox="0 0 16 16"><rect x="2" y="1" width="11" height="13" fill="url(#teal)"/><rect x="13" y="2" width="1" height="13" fill="#000"/><rect x="3" y="14" width="11" height="1" fill="#000"/><rect x="4.5" y="3.5" width="6" height="3" fill="#f2f4f4" stroke="#7a8a8a" stroke-width="1"/><rect x="1" y="1" width="1" height="13" fill="#f2e41a"/><path d="M1,2.5 h1 M1,4.5 h1 M1,6.5 h1 M1,8.5 h1 M1,10.5 h1 M1,12.5 h1" stroke="#6a6a20" stroke-width="0.6"/></svg>
<div class="t" style="left:67.8px;top:473px;font-size:12px;line-height:12px;letter-spacing:-0.118px;">Products by Category</div>
<div class="a" style="left:37px;top:498px;width:9px;height:1px;background:repeating-linear-gradient(to right,#707070 0,#707070 1px,transparent 1px,transparent 2px);"></div>
<svg style="left:46px;top:489px" width="16" height="16" viewBox="0 0 16 16"><rect x="2" y="1" width="11" height="13" fill="url(#teal)"/><rect x="13" y="2" width="1" height="13" fill="#000"/><rect x="3" y="14" width="11" height="1" fill="#000"/><rect x="4.5" y="3.5" width="6" height="3" fill="#f2f4f4" stroke="#7a8a8a" stroke-width="1"/><rect x="1" y="1" width="1" height="13" fill="#f2e41a"/><path d="M1,2.5 h1 M1,4.5 h1 M1,6.5 h1 M1,8.5 h1 M1,10.5 h1 M1,12.5 h1" stroke="#6a6a20" stroke-width="0.6"/></svg>
<div class="t" style="left:67.8px;top:491px;font-size:12px;line-height:12px;letter-spacing:-0.303px;">Sales by Customer</div>
<div class="a" style="left:12px;top:512px;width:9px;height:9px;border:1px solid #858585;background:#fff;"></div>
<div class="a" style="left:14px;top:516px;width:5px;height:1px;background:#000;"></div>
<div class="a" style="left:22px;top:516px;width:5px;height:1px;background:repeating-linear-gradient(to right,#707070 0,#707070 1px,transparent 1px,transparent 2px);"></div>
<svg style="left:26px;top:507px" width="16" height="16" viewBox="0 0 16 16"><path d="M2.3,14 H15 L15.6,5 H8.5 L7.5,3 H3.3 L1.8,4.5 V13.5Z" fill="#3a4470" opacity="0.3" transform="translate(0.8,0.8)"/><path d="M1.6,12.5 V3.6 L2.6,2.1 H7 L8,4.1 H13.6 L14.3,5 V12.5Z" fill="#f3d466" stroke="#c8921a" stroke-width="1.1"/><rect x="3" y="3.4" width="4" height="1.2" fill="#fffbe0"/><path d="M1.8,12.9 L4.3,6.6 H15.4 L14.4,12.9Z" fill="url(#fold)" stroke="#c8921a" stroke-width="1.1" stroke-linejoin="round"/><rect x="5" y="7.3" width="9" height="1" fill="#fffbe0"/></svg>
<div class="t" style="left:48.7px;top:509px;font-size:12px;line-height:12px;letter-spacing:-0.200px;">Tiled Dashboards</div>
<div class="a" style="left:37px;top:534px;width:9px;height:1px;background:repeating-linear-gradient(to right,#707070 0,#707070 1px,transparent 1px,transparent 2px);"></div>
<svg style="left:46px;top:525px" width="16" height="16" viewBox="0 0 16 16"><rect x="0" y="0" width="16" height="13" fill="#c6c6c6"/><rect x="0.5" y="0.5" width="15" height="12" fill="none" stroke="#a8a8a8"/><rect x="2" y="2" width="12" height="9" fill="#6e9ce6"/><path d="M2,5 H14 M2,8 H14 M6,2 V11 M10,2 V11" stroke="#8ab2f0" stroke-width="0.8"/><path d="M2,9.5 L4.5,8 L6.5,8.6 L9,6.2 L10.5,7.2 L14,3.5" fill="none" stroke="#fff" stroke-width="1.1"/><rect x="0" y="13" width="16" height="2" fill="#000"/></svg>
<div class="t" style="left:67.8px;top:527px;font-size:12px;line-height:12px;letter-spacing:-0.143px;">Customer Dashboard</div>
<div class="a" style="left:37px;top:552px;width:9px;height:1px;background:repeating-linear-gradient(to right,#707070 0,#707070 1px,transparent 1px,transparent 2px);"></div>
<svg style="left:46px;top:543px" width="16" height="16" viewBox="0 0 16 16"><ellipse cx="8" cy="8" rx="7.8" ry="5.9" fill="#b02030"/><ellipse cx="8" cy="7.2" rx="7.8" ry="5.9" fill="#e8283c"/><path d="M8,7.2 L0.3,7 A7.8,5.9 0 0 1 8,1.3 Z" fill="#5ab4f0"/><path d="M8,7.2 L8,1.3 A7.8,5.9 0 0 1 15.4,5.3 Z" fill="#3a6ed8"/><path d="M8,7.2 L15.4,5.3 A7.8,5.9 0 0 1 12.8,11.6 Z" fill="#48b050"/><path d="M8,7.2 L3.8,12 A7.8,5.9 0 0 1 0.3,7 Z" fill="#f6c010"/><path d="M0.4,8 A7.8,5.9 0 0 0 3.8,12.8 L3.8,12 A7.8,5.9 0 0 1 0.3,7Z" fill="#c89000"/><path d="M12.8,12.4 A7.8,5.9 0 0 0 15.7,8 L15.7,7.2 A7.8,5.9 0 0 1 12.8,11.6Z" fill="#2a8a30"/></svg>
<div class="t" style="left:67.8px;top:545px;font-size:12px;line-height:12px;letter-spacing:-0.077px;">Customers by Country</div>
<div class="a" style="left:37px;top:570px;width:9px;height:1px;background:repeating-linear-gradient(to right,#707070 0,#707070 1px,transparent 1px,transparent 2px);"></div>
<svg style="left:46px;top:561px" width="16" height="16" viewBox="0 0 16 16"><rect x="0" y="0" width="16" height="13" fill="#c6c6c6"/><rect x="0.5" y="0.5" width="15" height="12" fill="none" stroke="#a8a8a8"/><rect x="2" y="2" width="12" height="9" fill="#6e9ce6"/><path d="M2,5 H14 M2,8 H14 M6,2 V11 M10,2 V11" stroke="#8ab2f0" stroke-width="0.8"/><path d="M2,9.5 L4.5,8 L6.5,8.6 L9,6.2 L10.5,7.2 L14,3.5" fill="none" stroke="#fff" stroke-width="1.1"/><rect x="0" y="13" width="16" height="2" fill="#000"/></svg>
<div class="t" style="left:67.8px;top:563px;font-size:12px;line-height:12px;letter-spacing:-0.091px;">Product Dashboard</div>
<div class="a" style="left:37px;top:588px;width:9px;height:1px;background:repeating-linear-gradient(to right,#707070 0,#707070 1px,transparent 1px,transparent 2px);"></div>
<svg style="left:46px;top:579px" width="16" height="16" viewBox="0 0 16 16"><ellipse cx="8" cy="8" rx="7.8" ry="5.9" fill="#b02030"/><ellipse cx="8" cy="7.2" rx="7.8" ry="5.9" fill="#e8283c"/><path d="M8,7.2 L0.3,7 A7.8,5.9 0 0 1 8,1.3 Z" fill="#5ab4f0"/><path d="M8,7.2 L8,1.3 A7.8,5.9 0 0 1 15.4,5.3 Z" fill="#3a6ed8"/><path d="M8,7.2 L15.4,5.3 A7.8,5.9 0 0 1 12.8,11.6 Z" fill="#48b050"/><path d="M8,7.2 L3.8,12 A7.8,5.9 0 0 1 0.3,7 Z" fill="#f6c010"/><path d="M0.4,8 A7.8,5.9 0 0 0 3.8,12.8 L3.8,12 A7.8,5.9 0 0 1 0.3,7Z" fill="#c89000"/><path d="M12.8,12.4 A7.8,5.9 0 0 0 15.7,8 L15.7,7.2 A7.8,5.9 0 0 1 12.8,11.6Z" fill="#2a8a30"/></svg>
<div class="t" style="left:67.8px;top:581px;font-size:12px;line-height:12px;letter-spacing:-0.262px;">Sales by Customer Chart</div>
<div class="a" style="left:37px;top:606px;width:9px;height:1px;background:repeating-linear-gradient(to right,#707070 0,#707070 1px,transparent 1px,transparent 2px);"></div>
<svg style="left:46px;top:597px" width="16" height="16" viewBox="0 0 16 16"><ellipse cx="8" cy="8" rx="7.8" ry="5.9" fill="#b02030"/><ellipse cx="8" cy="7.2" rx="7.8" ry="5.9" fill="#e8283c"/><path d="M8,7.2 L0.3,7 A7.8,5.9 0 0 1 8,1.3 Z" fill="#5ab4f0"/><path d="M8,7.2 L8,1.3 A7.8,5.9 0 0 1 15.4,5.3 Z" fill="#3a6ed8"/><path d="M8,7.2 L15.4,5.3 A7.8,5.9 0 0 1 12.8,11.6 Z" fill="#48b050"/><path d="M8,7.2 L3.8,12 A7.8,5.9 0 0 1 0.3,7 Z" fill="#f6c010"/><path d="M0.4,8 A7.8,5.9 0 0 0 3.8,12.8 L3.8,12 A7.8,5.9 0 0 1 0.3,7Z" fill="#c89000"/><path d="M12.8,12.4 A7.8,5.9 0 0 0 15.7,8 L15.7,7.2 A7.8,5.9 0 0 1 12.8,11.6Z" fill="#2a8a30"/></svg>
<div class="t" style="left:67.8px;top:599px;font-size:12px;line-height:12px;letter-spacing:-0.348px;">Sales by Product</div>
<div class="a" style="left:37px;top:624px;width:9px;height:1px;background:repeating-linear-gradient(to right,#707070 0,#707070 1px,transparent 1px,transparent 2px);"></div>
<svg style="left:46px;top:615px" width="16" height="16" viewBox="0 0 16 16"><ellipse cx="8" cy="8" rx="7.8" ry="5.9" fill="#b02030"/><ellipse cx="8" cy="7.2" rx="7.8" ry="5.9" fill="#e8283c"/><path d="M8,7.2 L0.3,7 A7.8,5.9 0 0 1 8,1.3 Z" fill="#5ab4f0"/><path d="M8,7.2 L8,1.3 A7.8,5.9 0 0 1 15.4,5.3 Z" fill="#3a6ed8"/><path d="M8,7.2 L15.4,5.3 A7.8,5.9 0 0 1 12.8,11.6 Z" fill="#48b050"/><path d="M8,7.2 L3.8,12 A7.8,5.9 0 0 1 0.3,7 Z" fill="#f6c010"/><path d="M0.4,8 A7.8,5.9 0 0 0 3.8,12.8 L3.8,12 A7.8,5.9 0 0 1 0.3,7Z" fill="#c89000"/><path d="M12.8,12.4 A7.8,5.9 0 0 0 15.7,8 L15.7,7.2 A7.8,5.9 0 0 1 12.8,11.6Z" fill="#2a8a30"/></svg>
<div class="t" style="left:67.8px;top:617px;font-size:12px;line-height:12px;letter-spacing:-0.208px;">Sales by Product Category</div>
<div class="a" style="left:37px;top:642px;width:9px;height:1px;background:repeating-linear-gradient(to right,#707070 0,#707070 1px,transparent 1px,transparent 2px);"></div>
<svg style="left:46px;top:633px" width="16" height="16" viewBox="0 0 16 16"><ellipse cx="8" cy="8" rx="7.8" ry="5.9" fill="#b02030"/><ellipse cx="8" cy="7.2" rx="7.8" ry="5.9" fill="#e8283c"/><path d="M8,7.2 L0.3,7 A7.8,5.9 0 0 1 8,1.3 Z" fill="#5ab4f0"/><path d="M8,7.2 L8,1.3 A7.8,5.9 0 0 1 15.4,5.3 Z" fill="#3a6ed8"/><path d="M8,7.2 L15.4,5.3 A7.8,5.9 0 0 1 12.8,11.6 Z" fill="#48b050"/><path d="M8,7.2 L3.8,12 A7.8,5.9 0 0 1 0.3,7 Z" fill="#f6c010"/><path d="M0.4,8 A7.8,5.9 0 0 0 3.8,12.8 L3.8,12 A7.8,5.9 0 0 1 0.3,7Z" fill="#c89000"/><path d="M12.8,12.4 A7.8,5.9 0 0 0 15.7,8 L15.7,7.2 A7.8,5.9 0 0 1 12.8,11.6Z" fill="#2a8a30"/></svg>
<div class="t" style="left:67.8px;top:635px;font-size:12px;line-height:12px;letter-spacing:-0.482px;">Sales by Salesperson</div>
<div class="a" style="left:37px;top:660px;width:9px;height:1px;background:repeating-linear-gradient(to right,#707070 0,#707070 1px,transparent 1px,transparent 2px);"></div>
<svg style="left:46px;top:651px" width="16" height="16" viewBox="0 0 16 16"><rect x="0" y="0" width="16" height="13" fill="#c6c6c6"/><rect x="0.5" y="0.5" width="15" height="12" fill="none" stroke="#a8a8a8"/><rect x="2" y="2" width="12" height="9" fill="#6e9ce6"/><path d="M2,5 H14 M2,8 H14 M6,2 V11 M10,2 V11" stroke="#8ab2f0" stroke-width="0.8"/><path d="M2,9.5 L4.5,8 L6.5,8.6 L9,6.2 L10.5,7.2 L14,3.5" fill="none" stroke="#fff" stroke-width="1.1"/><rect x="0" y="13" width="16" height="2" fill="#000"/></svg>
<div class="t" style="left:67.8px;top:653px;font-size:12px;line-height:12px;letter-spacing:-0.448px;">Sales Dashboard</div>
<div class="a" style="left:253px;top:164px;width:5px;height:587px;background:#f0f0f0;"></div>
<div class="a" style="left:257px;top:190px;width:531px;height:561px;background:#f9f9f9;border-left:1px solid #d9d9d9;border-top:1px solid #d9d9d9;"></div>
<div class="a" style="left:257px;top:165px;width:81px;height:26px;background:#f0f0f0;border:1px solid #d9d9d9;"></div>
<div class="t" style="left:264px;top:173px;font-size:12px;line-height:12px;letter-spacing:0.4px;">Information</div>
<div class="a" style="left:337px;top:165px;width:45px;height:26px;background:#f0f0f0;border:1px solid #d9d9d9;"></div>
<div class="t" style="left:346.2px;top:173px;font-size:12px;line-height:12px;">Filter</div>
<div class="a" style="left:381px;top:165px;width:40px;height:26px;background:#f0f0f0;border:1px solid #d9d9d9;"></div>
<div class="t" style="left:390.3px;top:173px;font-size:12px;line-height:12px;">Sort</div>
<div class="a" style="left:420px;top:165px;width:61px;height:26px;background:#f0f0f0;border:1px solid #d9d9d9;"></div>
<div class="t" style="left:429.4px;top:173px;font-size:12px;line-height:12px;">Options</div>
<div class="a" style="left:538px;top:165px;width:56px;height:26px;background:#f0f0f0;border:1px solid #d9d9d9;"></div>
<div class="t" style="left:545.2px;top:173px;font-size:12px;line-height:12px;">Sample</div>
<div class="a" style="left:480px;top:163px;width:59px;height:28px;background:#f9f9f9;border:1px solid #d9d9d9;border-bottom:0;"></div>
<div class="t" style="left:489.4px;top:171px;font-size:12px;line-height:12px;letter-spacing:0.45px;">Output</div>
<svg style="left:268px;top:207px" width="13" height="13" viewBox="0 0 13 13"><rect x="0.5" y="0.5" width="12" height="12" rx="2.5" fill="#f3f3f3" stroke="#404040"/></svg>
<div class="t" style="left:284.1px;top:208px;font-size:12px;line-height:12px;letter-spacing:-0.08px;"><span class="u">U</span>se same options next time report is run</div>
<div class="t" style="left:268.7px;top:237px;font-size:12px;line-height:12px;letter-spacing:0.25px;">Output to:</div>
<svg style="left:357.4px;top:236.4px" width="14" height="14" viewBox="0 0 14 14"><circle cx="7" cy="7" r="6" fill="#f3f3f3" stroke="#404040"/></svg>
<div class="t" style="left:374.6px;top:238px;font-size:12px;line-height:12px;"><span class="u">P</span>rinter</div>
<svg style="left:452.4px;top:236.5px" width="14" height="14" viewBox="0 0 14 14"><circle cx="7" cy="7" r="6.6" fill="#005fb8"/><circle cx="7" cy="7" r="2.7" fill="#fff"/></svg>
<div class="t" style="left:469px;top:238px;font-size:12px;line-height:12px;"><span class="u">F</span>ile</div>
<svg style="left:517.4px;top:236.5px" width="14" height="14" viewBox="0 0 14 14"><circle cx="7" cy="7" r="6" fill="#f3f3f3" stroke="#404040"/></svg>
<div class="t" style="left:534.1px;top:238px;font-size:12px;line-height:12px;"><span class="u">E</span>mail</div>
<div class="a" style="left:269px;top:258px;width:82px;height:25px;background:#fdfdfd;border:1px solid #d0d0d0;border-radius:4px;"></div>
<div class="t" style="left:210px;width:200px;text-align:center;top:265px;font-size:12px;line-height:12px;">F<span class="u">i</span>le...</div>
<div class="a" style="left:358px;top:259px;width:415px;height:23px;background:#f0f0f0;border:1px solid #a8a8ae;box-shadow:inset 0 0 0 1px #fafafa;"></div>
<div class="t" style="left:363.7px;top:265px;font-size:12px;line-height:12px;">C:\Temp\Customer Orders.xlsx</div>
<div class="a" style="left:268px;top:299px;width:510px;height:183px;border:1px solid #dcdcdc;"></div>
<div class="a" style="left:278px;top:296px;width:50px;height:8px;background:#f9f9f9;"></div>
<div class="t" style="left:281.6px;top:295px;font-size:12px;line-height:12px;">Options</div>
<svg style="left:278px;top:315px" width="13" height="13" viewBox="0 0 13 13"><rect x="0" y="0" width="13" height="13" rx="3" fill="#005fb8"/><path d="M3.2,6.8 L5.5,9 L9.8,4.2" fill="none" stroke="#fff" stroke-width="1"/></svg>
<div class="t" style="left:294.4px;top:316px;font-size:12px;line-height:12px;"><span class="u">D</span>isplay file after creation</div>
<svg style="left:278px;top:330px" width="13" height="13" viewBox="0 0 13 13"><rect x="0.5" y="0.5" width="12" height="12" rx="2.5" fill="#f3f3f3" stroke="#404040"/></svg>
<div class="t" style="left:294.4px;top:331px;font-size:12px;line-height:12px;"><span class="u">A</span>dd timestamp to file name</div>
<svg style="left:278px;top:345px" width="13" height="13" viewBox="0 0 13 13"><rect x="0.5" y="0.5" width="12" height="12" rx="2.5" fill="#f7f7f7" stroke="#d4d4d4"/></svg>
<div class="t" style="left:294.4px;top:346px;font-size:12px;line-height:12px;color:#727272;">Embed fo<span class="u">n</span>ts in the file</div>
<svg style="left:278px;top:360px" width="13" height="13" viewBox="0 0 13 13"><rect x="0.5" y="0.5" width="12" height="12" rx="2.5" fill="#f3f3f3" stroke="#404040"/></svg>
<div class="t" style="left:294.4px;top:361px;font-size:12px;line-height:12px;letter-spacing:-0.11px;"><span class="u">O</span>utput each group as a separate file</div>
<svg style="left:278px;top:375px" width="13" height="13" viewBox="0 0 13 13"><rect x="0" y="0" width="13" height="13" rx="3" fill="#c2c2c2"/><path d="M3.2,6.8 L5.5,9 L9.8,4.2" fill="none" stroke="#fff" stroke-width="1"/></svg>
<div class="t" style="left:294.4px;top:376px;font-size:12px;line-height:12px;color:#727272;letter-spacing:0.14px;">Add g<span class="u">r</span>oup to file name</div>
<svg style="left:513px;top:315px" width="13" height="13" viewBox="0 0 13 13"><rect x="0.5" y="0.5" width="12" height="12" rx="2.5" fill="#f3f3f3" stroke="#404040"/></svg>
<div class="t" style="left:529.5px;top:316px;font-size:12px;line-height:12px;">Append to e<span class="u">x</span>isting file</div>
<svg style="left:513px;top:330px" width="13" height="13" viewBox="0 0 13 13"><rect x="0" y="0" width="13" height="13" rx="3" fill="#005fb8"/><path d="M3.2,6.8 L5.5,9 L9.8,4.2" fill="none" stroke="#fff" stroke-width="1"/></svg>
<div class="t" style="left:529.5px;top:331px;font-size:12px;line-height:12px;">Include <span class="u">h</span>eader row</div>
<svg style="left:513px;top:345px" width="13" height="13" viewBox="0 0 13 13"><rect x="0" y="0" width="13" height="13" rx="3" fill="#005fb8"/><path d="M3.2,6.8 L5.5,9 L9.8,4.2" fill="none" stroke="#fff" stroke-width="1"/></svg>
<div class="t" style="left:529.5px;top:346px;font-size:12px;line-height:12px;">Displa<span class="u">y</span> grid lines</div>
<svg style="left:513px;top:360px" width="13" height="13" viewBox="0 0 13 13"><rect x="0.5" y="0.5" width="12" height="12" rx="2.5" fill="#f3f3f3" stroke="#404040"/></svg>
<div class="t" style="left:529.5px;top:361px;font-size:12px;line-height:12px;">Include <span class="u">t</span>otals</div>
<div class="t" style="left:278.5px;top:403px;font-size:12px;line-height:12px;">Pass<span class="u">w</span>ord for file</div>
<div class="a" style="left:398px;top:398px;width:347px;height:23px;background:#fff;border:1px solid #a8a8ae;"></div>
<div class="a" style="left:746px;top:399px;width:21px;height:21px;background:#fbfbfb;border:1px solid #d6d6d6;border-radius:3px;"></div>
<svg style="left:748px;top:403px" width="18" height="12" viewBox="0 0 18 12"><path d="M0.3,6 C3,1.8 6,0 8.7,0 C11.4,0 14.4,1.8 17,6 C14.4,10.2 11.4,12 8.7,12 C6,12 3,10.2 0.3,6Z" fill="#000"/><circle cx="8.7" cy="6" r="3.7" fill="#fff"/><circle cx="8.7" cy="6" r="1.7" fill="#86c6e6"/></svg>
<div class="t" style="left:278.5px;top:433px;font-size:12px;line-height:12px;color:#6d6d6d;">Merge from</div>
<div class="a" style="left:348px;top:428px;width:397px;height:23px;background:#f0f0f0;border:1px solid #a0a0a8;box-shadow:inset 0 0 0 1px #b6d4f4;"></div>
<div class="a" style="left:746px;top:429px;width:21px;height:21px;background:#f9f9f9;border:1px solid #e6e6e6;border-radius:3px;"></div>
<div class="t" style="left:656.5px;width:200px;text-align:center;top:435px;font-size:11px;line-height:11px;color:#444;">...</div>
<div class="t" style="left:348.2px;top:460px;font-size:12px;line-height:12px;color:#6d6d6d;">Merge type</div>
<svg style="left:417.5px;top:459.7px" width="14" height="14" viewBox="0 0 14 14"><circle cx="7" cy="7" r="6.5" fill="#c2c2c2"/><circle cx="7" cy="7" r="3" fill="#fff"/></svg>
<div class="t" style="left:433.9px;top:461px;font-size:12px;line-height:12px;color:#6d6d6d;"><span class="u">L</span>etter</div>
<svg style="left:522.4px;top:459.7px" width="14" height="14" viewBox="0 0 14 14"><circle cx="7" cy="7" r="6" fill="#f7f7f7" stroke="#cfcfcf"/></svg>
<div class="t" style="left:539.4px;top:461px;font-size:12px;line-height:12px;color:#6d6d6d;">Dire<span class="u">c</span>tory</div>
<div class="a" style="left:8px;top:751px;width:780px;height:1px;background:#d7d7d7;"></div>
<div class="a" style="left:8px;top:752px;width:780px;height:23px;background:#f0f0f0;"></div>
<div class="t" style="left:12.5px;top:758px;font-size:12px;line-height:12px;letter-spacing:-0.37px;">Database: My Database</div>
<div class="t" style="left:729.3px;top:758px;font-size:12px;line-height:12px;letter-spacing:-0.6px;">Ready</div>
<div class="a" style="left:765px;top:753px;width:1px;height:20px;background:#d7d7d7;"></div>
<div class="a" style="left:784px;top:765px;width:2px;height:2px;background:#b4b4b4;"></div>
<div class="a" style="left:781px;top:768px;width:2px;height:2px;background:#b4b4b4;"></div>
<div class="a" style="left:784px;top:768px;width:2px;height:2px;background:#b4b4b4;"></div>
<div class="a" style="left:778px;top:771px;width:2px;height:2px;background:#b4b4b4;"></div>
<div class="a" style="left:781px;top:771px;width:2px;height:2px;background:#b4b4b4;"></div>
<div class="a" style="left:784px;top:771px;width:2px;height:2px;background:#b4b4b4;"></div>
</body></html>
